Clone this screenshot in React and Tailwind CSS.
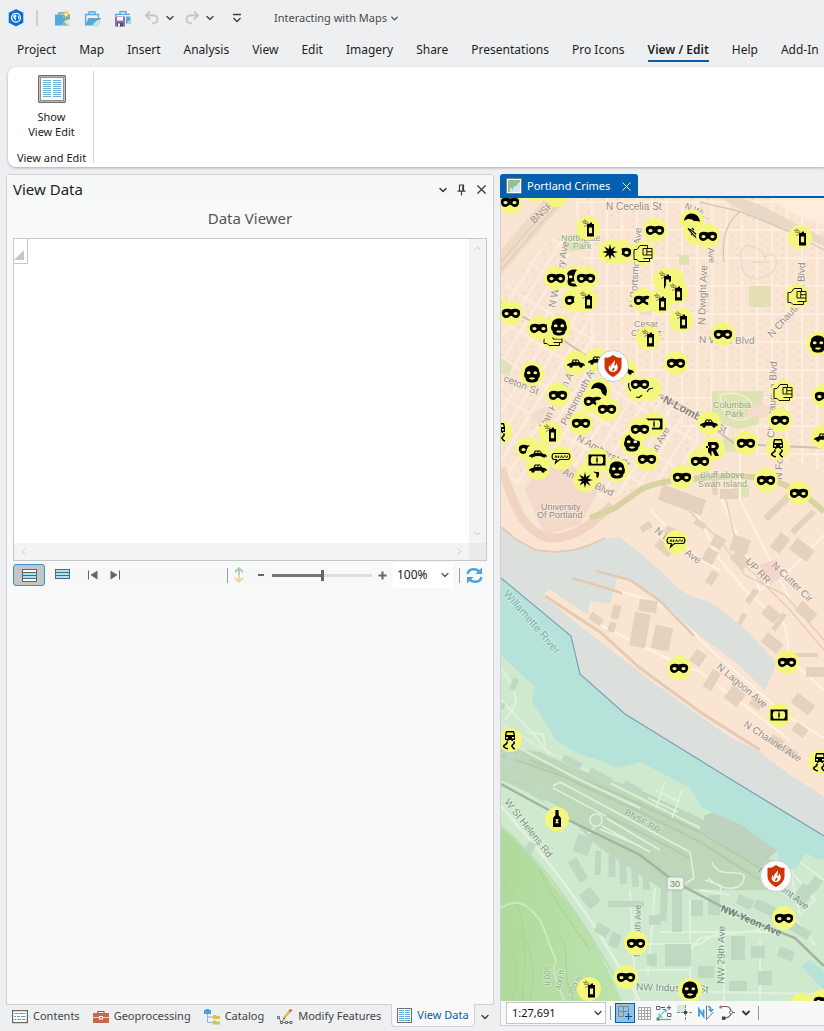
import React from 'react';
import { ChevronDown, ChevronUp, ChevronLeft, ChevronRight, X } from 'lucide-react';

/* ---------- small icons ---------- */

function AppLogo() {
  return (
    <svg width="16" height="18" viewBox="0 0 16 18" aria-hidden="true">
      <path d="M8 1 L14.5 4.2 V13.2 L8 16.6 L1.5 13.2 V4.2 Z" fill="#0a6fdc" stroke="#0a6fdc" strokeWidth="1.6" strokeLinejoin="round" />
      <circle cx="8" cy="8.8" r="4.4" fill="none" stroke="#fff" strokeWidth="1.3" />
      <path d="M5.5 6.4 L8 5.6 L8.6 7.4 L7.2 8.4 L8.2 9.8 L7.6 11.6 L6.4 10 L5.4 9 Z M10 6.6 L11.4 8 L10.8 10.4 L10 9 Z" fill="#fff" />
    </svg>
  );
}

const NewProjectIcon = () => (
  <svg width="18" height="17" viewBox="0 0 18 17" aria-hidden="true">
    <path d="M5 5 V3 H12 V5" fill="none" stroke="#55a9dc" strokeWidth="1.4" />
    <rect x="1" y="4.5" width="15" height="11" fill="#55a9dc" />
    <path d="M8 15.5 L11 10.5 L16 9 V15.5 Z" fill="#d8ecd6" />
    <path d="M8 15.5 L11 12 L14 15.5 Z" fill="#8fbf8a" />
    <path d="M12 0 V9 M7.5 4.5 H16.5 M8.8 1.3 L15.2 7.7 M15.2 1.3 L8.8 7.7" stroke="#e9c766" strokeWidth="1" />
    <circle cx="12" cy="4.5" r="2" fill="#fdf3cf" stroke="#e3b84c" />
  </svg>
);

const OpenProjectIcon = () => (
  <svg width="18" height="17" viewBox="0 0 18 17" aria-hidden="true">
    <path d="M5 4 V2 H11 V4 M1.6 15 V4.5 H14.4 V8" fill="none" stroke="#55a9dc" strokeWidth="1.3" />
    <path d="M1 15.5 L4.5 8 H17 L14.5 15.5 Z" fill="#55a9dc" />
    <path d="M8 15.5 L12 11 L16.5 9 L14.5 15.5 Z" fill="#cde6d2" />
  </svg>
);

const SaveProjectIcon = () => (
  <svg width="18" height="17" viewBox="0 0 18 17" aria-hidden="true">
    <path d="M6 4 V1.6 H12 V4 M1.6 6 V4.4 H16" fill="none" stroke="#55a9dc" strokeWidth="1.3" />
    <path d="M12 6.5 H16.5 V14 H12 Z" fill="#55a9dc" />
    <path d="M12 14 L16.5 9 V14 Z" fill="#b8dcb9" />
    <rect x="1" y="6.5" width="10" height="10" fill="#8b6fb8" />
    <rect x="3" y="7" width="6" height="3.5" fill="#fff" />
    <rect x="3" y="12.5" width="6" height="4" fill="#5b5163" />
    <rect x="4" y="13.5" width="2" height="3" fill="#fff" />
  </svg>
);

const UndoIcon = ({ flip }) => (
  <svg width="16" height="16" viewBox="0 0 16 16" className={flip ? '-scale-x-100' : ''} aria-hidden="true">
    <path d="M6 1.5 L2 5.5 L6 9.5 M2 5.5 H10 C15 5.5 15 13.5 8 13.5" fill="none" stroke="#c3c5c7" strokeWidth="1.8" />
  </svg>
);

const CustomizeIcon = () => (
  <svg width="10" height="10" viewBox="0 0 10 10" aria-hidden="true">
    <path d="M1 1.5 H9 M1.5 5 L5 8.5 L8.5 5" fill="none" stroke="#3c3c3c" strokeWidth="1.3" />
  </svg>
);

const ShowViewIcon = () => (
  <svg width="28" height="28" viewBox="0 0 28 28" aria-hidden="true">
    <rect x="0.7" y="0.7" width="26.6" height="26.6" rx="1" fill="#fff" stroke="#6e6e6e" strokeWidth="1.4" />
    <rect x="2.5" y="2.5" width="23" height="23" fill="#fbfbfb" stroke="#8f8f8f" />
    {[5, 7, 9, 11, 13, 15, 17, 19, 21].map((y) => (
      <path key={y} d={`M5 ${y + 0.5} H13 M15 ${y + 0.5} H23`} stroke="#69b0dd" strokeWidth="1" />
    ))}
  </svg>
);

const PinIcon = () => (
  <svg width="9" height="12" viewBox="0 0 9 12" aria-hidden="true">
    <path d="M2.5 7 V1 H6.5 V7 M5.8 1 V7 M0.5 7.2 H8.5 M4.5 7.2 V11.5" fill="none" stroke="#3c3c3c" strokeWidth="1.2" />
  </svg>
);

const RowsIcon = () => (
  <svg width="15" height="13" viewBox="0 0 15 13" aria-hidden="true">
    <rect x="0.5" y="0.5" width="14" height="12" fill="#fff" stroke="#5f6468" />
    <rect x="1" y="4" width="13" height="5" fill="#a9e1f5" />
    <path d="M0 3.5 H15 M0 6.5 H15 M0 9.5 H15" stroke="#5f6468" />
  </svg>
);

const SelectedRowsIcon = () => (
  <svg width="15" height="10" viewBox="0 0 15 10" aria-hidden="true">
    <rect x="0.5" y="0.5" width="14" height="9" fill="#a9e1f5" stroke="#5f6468" />
    <path d="M0 3.5 H15 M0 6.5 H15" stroke="#5f6468" />
  </svg>
);

const StepIcon = ({ flip }) => (
  <svg width="10" height="10" viewBox="0 0 10 10" className={flip ? '-scale-x-100' : ''} aria-hidden="true">
    <path d="M0.5 0.5 V9.5" stroke="#666" />
    <path d="M9.5 0.5 V9.5 L2.5 5 Z" fill="#666" />
  </svg>
);

const FitHeightIcon = () => (
  <svg width="10" height="16" viewBox="0 0 10 16" aria-hidden="true">
    <path d="M1 5 L5 1.2 L9 5 M5 1.5 V8" fill="none" stroke="#a9cfa9" strokeWidth="1.8" />
    <path d="M1 11 L5 14.8 L9 11 M5 8 V14.5" fill="none" stroke="#f0cfa4" strokeWidth="1.8" />
  </svg>
);

const RefreshIcon = () => (
  <svg width="17" height="17" viewBox="0 0 17 17" aria-hidden="true">
    <path d="M1.6 7 C2.5 1.5 10 0.5 13.6 5" fill="none" stroke="#50a4dc" strokeWidth="2.5" />
    <path d="M16 0.5 V7 H9.5 Z" fill="#50a4dc" />
    <path d="M15.4 10 C14.5 15.5 7 16.5 3.4 12" fill="none" stroke="#50a4dc" strokeWidth="2.5" />
    <path d="M1 16.5 V10 H7.5 Z" fill="#50a4dc" />
  </svg>
);

const ContentsIcon = () => (
  <svg width="16" height="14" viewBox="0 0 16 14" aria-hidden="true">
    <rect x="0.6" y="0.6" width="14.8" height="12" fill="#fff" stroke="#666" strokeWidth="1.2" />
    <path d="M2.5 3.5 H6 M7 3.5 H13.5 M5 6.5 H8 M9 6.5 H13.5 M5 9.5 H9 M10 9.5 H13.5" stroke="#50a4dc" strokeWidth="1.2" />
    <path d="M2.5 6.5 H4 M2.5 9.5 H4" stroke="#777" />
  </svg>
);

const ToolboxIcon = () => (
  <svg width="16" height="14" viewBox="0 0 16 14" aria-hidden="true">
    <path d="M5 4 V1.5 H11 V4" fill="none" stroke="#b5543c" strokeWidth="1.2" />
    <rect y="3" width="16" height="10" fill="#c8694b" />
    <path d="M0 7.5 H16" stroke="#f1d0c4" />
    <rect x="6" y="6" width="4" height="3.5" fill="#fff" />
    <rect x="7" y="7" width="2" height="1.5" fill="#c8694b" />
  </svg>
);

const CatalogIcon = () => (
  <svg width="16" height="16" viewBox="0 0 16 16" aria-hidden="true">
    <rect y="1" width="7" height="4" fill="#4a9fd8" />
    <path d="M2 1 V0.5 H5" stroke="#4a9fd8" />
    <path d="M3.5 5 V13.5 H9 M3.5 8 H9" fill="none" stroke="#8bb8d2" strokeWidth="1" />
    <path d="M9 6 H12 L13 7 H16 V10 H9 Z M9 11.5 H12 L13 12.5 H16 V15.5 H9 Z" fill="#d6c24c" />
  </svg>
);

const ModifyIcon = () => (
  <svg width="16" height="16" viewBox="0 0 16 16" aria-hidden="true">
    <path d="M1.5 8.5 L4.5 13.5 L8 9 M5 13.5 H14" fill="none" stroke="#777" />
    <path d="M0.5 7.5 h2 v2 h-2z M3.5 12.5 h2 v2 h-2z M8.5 12.5 h2 v2 h-2z M13 12.5 h2 v2 h-2z" fill="#fff" stroke="#666" />
    <path d="M7 9 L13 2" stroke="#dfbe45" strokeWidth="2.6" />
    <path d="M12.5 2.6 L14.5 0.5" stroke="#d06a5a" strokeWidth="2.6" />
    <path d="M6 10.5 L7 8.3 L8.3 9.5 Z" fill="#555" />
  </svg>
);

const ViewDataIcon = () => (
  <svg width="15" height="15" viewBox="0 0 15 15" aria-hidden="true">
    <rect x="0.5" y="0.5" width="14" height="14" fill="#fff" stroke="#6e6e6e" />
    {[2.5, 4.5, 6.5, 8.5, 10.5, 12.5].map((y) => (
      <path key={y} d={`M2 ${y} H7 M8 ${y} H13`} stroke="#5aaae0" />
    ))}
  </svg>
);

const MapTabIcon = () => (
  <svg width="16" height="16" viewBox="0 0 16 16" aria-hidden="true">
    <rect x="0.5" y="0.5" width="15" height="15" fill="#fff" stroke="#7b7b7b" />
    <rect x="2" y="2" width="12" height="12" fill="#cfe8f5" />
    <path d="M2 2 H14 V4 L11 6 V8 H8 V10 L6 11 L7 13 L6 14 H2 Z" fill="#93bf95" />
    <path d="M4 9 L6 11 L7 14 H4 Z" fill="#cfe8f5" />
  </svg>
);

/* ---------- map symbols, each drawn around 0,0 ---------- */

const glyphs = {
  none: null,
  mask: (
    <path fillRule="evenodd" d="M-9 -1.5 C-8.5 -4.5 -3.5 -4.8 0 -3.4 C3.5 -4.8 8.5 -4.5 9 -1.5 C9.6 2 8 5 4.6 5 C2 5 1.4 2.8 0 2.8 C-1.4 2.8 -2 5 -4.6 5 C-8 5 -9.6 2 -9 -1.5 Z M-6.6 0.6 A2 1.5 0 1 0 -2.4 0.6 A2 1.5 0 1 0 -6.6 0.6 Z M2.4 0.6 A2 1.5 0 1 0 6.6 0.6 A2 1.5 0 1 0 2.4 0.6 Z" />
  ),
  ski: (
    <path fillRule="evenodd" d="M0 -8.5 C4.5 -8.5 7 -6 7.2 -2.5 L8 0 L7.6 3 L6.4 4 C6.2 7.4 4 8.5 0 8.5 C-4 8.5 -6.2 7.4 -6.4 4 L-7.6 3 L-8 0 L-7.2 -2.5 C-7 -6 -4.5 -8.5 0 -8.5 Z M-5.2 -1.2 A1.9 1.5 0 1 0 -1.4 -1.2 A1.9 1.5 0 1 0 -5.2 -1.2 Z M1.4 -1.2 A1.9 1.5 0 1 0 5.2 -1.2 A1.9 1.5 0 1 0 1.4 -1.2 Z M-3 4.6 C-2.5 3.4 -1 3.2 0 3.6 C1 3.2 2.5 3.4 3 4.6 C2 6 -2 6 -3 4.6 Z" />
  ),
  spray: (
    <>
      <path fillRule="evenodd" d="M2.5 -5.5 H4 V-4 H6 V8.5 H-1 V-4 H1.2 Z M0.9 -0.5 V5.2 H4.1 V-0.5 Z" />
      <path d="M0.6 -5 L-4 -8.5 M0 -4.2 L-5 -5 M0 -3.4 L-4 -1.5 M-6 -7 L-2 -5.8" fill="none" stroke="#4d4d2c" strokeWidth="0.7" />
    </>
  ),
  car: (
    <>
      <path d="M-9 2.6 C-9 0.4 -6 0 -4.5 -0.6 L-3.2 -3.6 H2 L4.2 -0.6 C7 0 9 0.6 9 2.8 H-9 Z" />
      <circle cx="-5" cy="3" r="1.8" />
      <circle cx="5" cy="3" r="1.8" />
      <path d="M-2.3 -2.5 H-0.6 V-0.9 H-2.9 Z M0.4 -2.5 H1.6 L2.7 -0.9 H0.4 Z" fill="#f5f77c" />
    </>
  ),
  skid: (
    <>
      <path fillRule="evenodd" d="M-4 -9 H4 L5 -5 V0 H3 V1 H1.5 V0 H-1.5 V1 H-3 V0 H-5 V-5 Z M-3 -7.5 L-3.6 -5 H3.6 L3 -7.5 Z M-4 -3 H-2 V-1.6 H-4Z M2 -3 H4 V-1.6 H2Z" />
      <path d="M-3.5 1.5 C-1 4 -8 5 -6 7 C-4.5 8.5 -3 8.8 -2 8.8 M3.5 1.5 C6 4 0 5 2.5 7 C3.5 8 3 8.8 5 8.8" fill="none" stroke="#000" strokeWidth="1.6" />
    </>
  ),
  fist: (
    <path d="M-9 -3.5 H-6 L-3 -7.5 H4.5 V-4.5 M-9 -3.5 V6.5 H-6 L-4 8.5 H6.5 V5.5 M0 -4.5 H9 V5.5 H0.5 M0 -4.5 V2 H9 M3.8 -4.5 V2 M3.8 -1.3 H9" fill="none" stroke="#111" strokeWidth="1" />
  ),
  speech: (
    <>
      <path d="M-7 -4.5 H7 C9.5 -4.5 9.5 1.5 7 1.5 H-1.5 L-5.5 5 L-4.5 1.5 H-7 C-9.5 1.5 -9.5 -4.5 -7 -4.5 Z" fill="none" stroke="#000" strokeWidth="1.2" />
      <path d="M-6 0 L-5 -2.5 L-4 0 M-2.5 -2.5 V0 M-3.4 -1.2 H-1.6 M-0.5 0 L0.5 -2.5 L1.5 0 M3.5 -2.5 L2.5 0 M4.5 -2.5 L5.5 0 M6.6 -2.5 V-0.4" fill="none" stroke="#000" strokeWidth="0.8" />
    </>
  ),
  money: (
    <>
      <path fillRule="evenodd" d="M-8.5 -5.5 H8.5 V5.5 H-8.5 Z M-4.6 -3.8 C-6.8 -3.4 -6.8 3.4 -4.6 3.8 H4.6 C6.8 3.4 6.8 -3.4 4.6 -3.8 Z" />
      <path d="M0 -2.5 V2.5 M0 -5 V-3.4 M0 5 V3.4" stroke="#000" strokeWidth="1.4" />
    </>
  ),
  bottle: (
    <path fillRule="evenodd" d="M-1.6 -9 H1.6 V-4 C1.6 -3 4 -2.5 4 0 V8 H-4 V0 C-4 -2.5 -1.6 -3 -1.6 -4 Z M-2 0.3 L-0.6 2.2 L-2 4.2 H2 L0.6 2.2 L2 0.3 Z" />
  ),
  burst: (
    <path d="M0 -8 L1.2 -3 L5.5 -5.5 L3 -1.2 L8 0 L3 1.3 L5.5 6 L1.2 3 L0 8 L-1.3 3 L-5.5 5.5 L-3 1.2 L-8 0 L-3 -1.3 L-6 -5.5 L-1.2 -3 Z" />
  ),
  letter: (
    <path fillRule="evenodd" d="M-5 -7 H2 C7 -7 7 0.5 3 0.8 L6 7 H2 L-0.5 2 H-1.5 V7 H-5 Z M-1.5 -4 H1 C3 -4 3 -1 1 -1 H-1.5 Z M-7 -3 H-4 V-1 H-7Z" />
  ),
  umbrella: (
    <path d="M-8 0 C-7 -10 7 -10 8 1 L7 6 L3 4 L2 0 C0 -2.5 -5 -3 -8 0 Z" />
  ),
  knife: (
    <path d="M-8 -4.5 L-4 -2.5 L3 4 L2 6 L-3 1.5 Z M-5 2 L-3.5 0 M-2 -3 L-4 -5" fill="#f5f77c" stroke="#111" strokeWidth="1.2" />
  ),
  scuffle: (
    <path d="M-9 -6 C-10 -3 -9 0 -7 2 M-2 8 L1 8.5 L4 6 M9 3 L11 0 L15 -1" fill="none" stroke="#111" strokeWidth="1.2" />
  ),
};

function Marker({ x, y, kind }) {
  return (
    <g transform={`translate(${x} ${y})`}>
      <circle r="12" fill="#f5f77c" />
      {glyphs[kind]}
    </g>
  );
}

function FireMarker({ x, y }) {
  return (
    <g transform={`translate(${x} ${y})`}>
      <circle r="15.5" fill="#fff" stroke="#c9cbd6" />
      <path d="M0 -11 C2.5 -9 5 -8.2 8.5 -8.2 V0 C8.5 5.5 4 9 0 11 C-4 9 -8.5 5.5 -8.5 0 V-8.2 C-5 -8.2 -2.5 -9 0 -11 Z" fill="#cf3306" />
      <path d="M1.5 -6 C3 -3.4 0.4 -2 1.6 0 C2.6 -0.4 3.4 -1.6 3.2 -3 C6 0.6 5 5.6 0 6 C-5 5.8 -5.4 0.8 -2.8 -1 C-2.8 0.6 -2.4 1.2 -1.6 1.4 C-3 -2 1 -3 1.5 -6 Z" fill="#fff" />
      <path d="M0.8 1.6 C0 3 -1.6 3.4 -0.8 5 C1.4 5 2.2 3 0.8 1.6 Z" fill="#cf3306" />
    </g>
  );
}

const markers = [
  ['none', 535, 190], ['none', 556, 195], ['mask', 510, 202], ['spray', 588, 228], ['mask', 655, 230],
  ['umbrella', 692, 221], ['knife', 696, 233], ['mask', 708, 236], ['spray', 800, 237],
  ['mask', 622, 252], ['burst', 610, 252], ['fist', 643, 253], ['ski', 574, 278], ['mask', 556, 278],
  ['mask', 586, 278], ['none', 672, 280], ['spray', 665, 280], ['spray', 676, 292], ['mask', 574, 300],
  ['spray', 586, 300], ['mask', 643, 300], ['spray', 660, 302], ['mask', 492, 303], ['mask', 511, 313],
  ['spray', 681, 320], ['fist', 553, 337], ['mask', 539, 328], ['ski', 559, 327], ['mask', 723, 334],
  ['spray', 648, 338], ['ski', 818, 344], ['fist', 797, 296], ['car', 576, 363], ['car', 597, 360],
  ['car', 625, 370], ['mask', 676, 363], ['ski', 532, 374], ['fist', 783, 392], ['mask', 824, 396],
  ['none', 649, 389], ['scuffle', 638, 389], ['umbrella', 599, 390], ['mask', 558, 395],
  ['mask', 593, 401], ['mask', 607, 409], ['mask', 581, 423], ['spray', 550, 433], ['skid', 500, 432],
  ['money', 654, 424], ['ski', 632, 443], ['mask', 640, 429], ['mask', 647, 459], ['car', 709, 423],
  ['letter', 713, 449], ['mask', 700, 461], ['mask', 682, 477], ['mask', 746, 443], ['mask', 780, 420],
  ['skid', 778, 448], ['mask', 766, 480], ['mask', 799, 493], ['car', 823, 437], ['mask', 528, 449],
  ['car', 538, 454], ['car', 538, 468], ['speech', 561, 458], ['mask', 590, 474], ['money', 597, 460],
  ['burst', 585, 480], ['ski', 617, 470], ['speech', 676, 542], ['mask', 679, 668], ['mask', 787, 662],
  ['money', 779, 715], ['skid', 510, 740], ['skid', 820, 762], ['bottle', 557, 819], ['mask', 784, 918],
  ['mask', 636, 943], ['mask', 626, 977], ['ski', 690, 990], ['spray', 589, 989], ['none', 802, 1005],
  ['mask', 823, 1001],
];

/* x, y, rotation, text, size, colour, weight */
const labels = [
  [606, 210, 0, 'N Cecelia St', 10],
  [684, 208, 25, 'N Wi...', 9],
  [534, 224, -42, 'BNSF', 10],
  [561, 241, 0, 'Northgate', 9, '#8faa80'],
  [573, 249, 0, 'Park', 9, '#8faa80'],
  [636, 308, -86, 'N Portsmouth Ave', 10],
  [555, 308, -78, 'N Woolsey Ave', 10],
  [705, 325, -88, 'N Dwight Ave', 10],
  [708, 248, 86, 'Ave', 9],
  [804, 296, -88, 'ua Blvd', 10],
  [772, 338, -48, 'N Chauta', 10],
  [634, 327, 0, 'Cesar', 9],
  [631, 336, 0, 'Chavez', 9],
  [699, 343, 1, 'N Willis Blvd', 10],
  [774, 448, -88, 'N Chautauqua Blvd', 10],
  [503, 381, 22, 'ceton St', 10],
  [545, 429, -62, 'Van Houten Ave', 10],
  [566, 426, -62, 'Portsmouth Ave', 10],
  [659, 400, 28, '-N-Lombard', 11, '#8a8277', 'bold'],
  [716, 430, 20, 'St', 10],
  [576, 440, 29, 'N Amherst St', 10],
  [562, 474, 26, 'Amh', 10],
  [594, 488, 26, 'Blvd', 10],
  [656, 455, -62, 'lin Ave', 10],
  [713, 408, 0, 'Columbia', 9, '#8faa80'],
  [725, 417, 0, 'Park', 9, '#8faa80'],
  [700, 478, 0, 'Bluff above', 9, '#8faa80'],
  [698, 487, 0, 'Swan Island', 9, '#8faa80'],
  [782, 480, -88, 'N Fo', 10],
  [541, 510, 0, 'University', 9],
  [537, 518, 0, 'Of Portland', 9],
  [654, 532, 36, 'N Basin Ave', 10],
  [745, 562, 46, 'UP RR', 10],
  [771, 566, 44, 'N Cutter Cir', 10],
  [503, 594, 49, 'Willamette River', 11, '#7fb0a9'],
  [716, 668, 40, 'N Lagoon Ave', 10],
  [743, 726, 33, 'N Channel Ave', 10],
  [624, 814, 30, 'BNSF RR', 9, '#94a88e'],
  [504, 802, 52, 'W St Helens Rd', 10, '#7c9480'],
  [757, 872, 38, 'NW Front Ave', 10, '#7c9480'],
  [720, 911, 23, 'NW-Yeon-Ave', 10, '#6c8070', 'bold'],
  [640, 957, -89, 'NW 35th Ave', 9, '#7c9480'],
  [724, 984, -89, 'NW 29th Ave', 10, '#7c9480'],
  [636, 990, 2, 'NW Industrial St', 10, '#7c9480'],
  [544, 966, 88, '500 ft', 8, '#8fae85'],
  [561, 990, -80, '400 ft', 8, '#8fae85'],
  [572, 996, -60, '300 ft', 8, '#8fae85'],
];

/* x, y, width, height, rotation */
const harbourBuildings = [
  [640, 630, 16, 34, 10], [662, 638, 18, 24, 12], [648, 606, 18, 12, 8], [616, 612, 8, 14, 15], [612, 627, 7, 10, 15],
  [596, 619, 14, 8, 35], [698, 658, 12, 14, 35], [712, 680, 10, 20, 30], [735, 696, 16, 16, 38], [772, 643, 20, 12, 38],
  [771, 614, 16, 12, 40], [779, 622, 5, 20, 35], [752, 596, 6, 16, 35], [742, 619, 5, 12, 30], [780, 543, 12, 18, 38],
  [806, 612, 20, 12, 42], [802, 550, 22, 14, 38], [806, 655, 24, 4, 0], [803, 704, 22, 12, 38], [776, 742, 14, 10, 33],
  [790, 752, 16, 8, 33], [664, 548, 18, 9, 40], [710, 556, 12, 14, 30], [718, 542, 12, 12, 30], [712, 578, 8, 14, 30],
  [682, 500, 46, 16, 20], [715, 486, 5, 18, 0], [729, 494, 18, 10, 0], [646, 527, 12, 7, -30], [740, 545, 18, 16, 20],
  [672, 532, 14, 8, 20], [700, 524, 12, 6, 30], [780, 505, 40, 7, -44], [803, 522, 30, 6, -44], [740, 560, 18, 12, 45],
  [756, 704, 12, 8, 35], [800, 730, 14, 10, 35], [815, 672, 18, 10, 0],
];

const southBuildings = [
  [508, 762, 9, 18, 30], [520, 772, 9, 18, 30], [540, 792, 16, 14, 30], [583, 845, 16, 18, 20], [598, 863, 6, 24, 2],
  [578, 870, 10, 24, -30], [612, 866, 7, 22, 0], [623, 870, 7, 28, -3], [635, 874, 7, 26, -3], [646, 878, 7, 24, -3],
  [590, 898, 14, 18, -38], [626, 904, 36, 6, 0], [664, 900, 7, 42, 3], [677, 910, 10, 44, 0], [697, 908, 12, 16, 0],
  [714, 905, 12, 20, 0], [602, 930, 14, 10, 30], [615, 940, 10, 14, 20], [655, 920, 12, 10, 0], [678, 955, 26, 22, 0],
  [652, 960, 10, 12, 0], [706, 972, 16, 12, 0], [738, 948, 14, 24, 0], [758, 952, 14, 12, 0], [738, 986, 18, 10, 0],
  [765, 978, 14, 14, 0], [745, 902, 16, 10, 25], [765, 908, 22, 10, 25], [799, 930, 24, 9, 30], [786, 954, 16, 10, 20],
  [803, 895, 14, 20, 35], [815, 884, 10, 14, 35], [600, 777, 24, 9, 28], [632, 788, 18, 8, 28],
  [572, 762, 20, 7, 28], [514, 684, 6, 12, 20], [500, 705, 10, 6, 30], [530, 848, 8, 12, 30],
];

function Buildings({ list, fill }) {
  return list.map(([x, y, w, h, r]) => (
    <rect key={`${x}-${y}`} x={x - w / 2} y={y - h / 2} width={w} height={h} fill={fill} transform={`rotate(${r} ${x} ${y})`} />
  ));
}

const northLand =
  'M501 198 H824 V797 L806 785 L790 775 L760 752 L730 737 L690 709 L650 680 L620 657 L580 626 L543 596 L549 589 L588 615 L590 601 L610 604 L617 578 L628 580 L665 605 L694 631 L735 662 L765 690 L777 663 L750 634 L730 617 L710 602 L690 596 L678 588 L662 572 L642 555 L620 537 L605 539 L590 546 L575 551 L555 553 L535 551 L515 540 L501 528 Z';

const southLand =
  'M501 655 L520 673 L535 687 L532 702 L545 722 L556 740 L576 753 L604 762 L618 768 L640 762 L652 768 L690 788 L702 808 L740 824 L778 851 L779 870 L796 868 L806 853 L815 858 L824 860 V1001 H501 Z';

function CrimeMap() {
  return (
    <svg
      className="absolute inset-0 size-full"
      viewBox="501 198 323 803"
      preserveAspectRatio="xMidYMid slice"
      role="img"
      aria-label="Portland crimes map"
      fontFamily="'Liberation Sans', Arial, sans-serif"
    >
      <defs>
        <pattern id="grid" width="15" height="28" patternUnits="userSpaceOnUse">
          <path d="M7 0 V28 M0 6 H15" stroke="#fdf0e3" strokeWidth="1.6" />
          <path d="M1 2 h3 v2 h-3z M11 10 h2 v3 h-2z M2 14 h2 v3 h-2z M11 19 h2 v2 h-2z M2 23 h2 v2 h-2z" fill="#f0decd" />
        </pattern>
        <pattern id="slant" width="13" height="32" patternUnits="userSpaceOnUse" patternTransform="rotate(32)">
          <path d="M6 0 V32 M0 6 H13" stroke="#fcefe2" strokeWidth="1.6" />
          <path d="M1 2 h2 v2 h-2z M10 10 h2 v3 h-2z M1 15 h2 v3 h-2z M9 21 h2 v2 h-2z M1 26 h2 v2 h-2z" fill="#efdccb" />
        </pattern>
        <clipPath id="north"><path d={northLand} /></clipPath>
        <clipPath id="south"><path d={southLand} /></clipPath>
        <linearGradient id="hill" x1="0" y1="0" x2="1" y2="0">
          <stop offset="0" stopColor="#b0da9b" />
          <stop offset="1" stopColor="#bce2ae" />
        </linearGradient>
      </defs>

      <rect x="0" y="0" width="1400" height="1400" fill="#dbe0dc" />
      <path d="M501 578 L571 636 L580 674 L625 714 L732 780 L824 836 V1001 H501 Z" fill="#b5e3da" />
      <path d={northLand} fill="#fae5d3" />

      <g clipPath="url(#north)">
        <path d="M575 198 H824 V470 L700 440 L590 360 Z" fill="url(#grid)" />
        <path d="M501 290 L560 230 L575 270 L600 350 L700 430 L690 480 L600 500 L501 480 Z" fill="url(#slant)" />
        <path d="M501 275 L568 198 H545 L501 250 Z" fill="#efdac3" />
        <path d="M501 262 L556 198 M501 270 L563 198" stroke="#d8c3ab" strokeWidth="1" />
        <path d="M720 198 L745 212 L824 246 V238 L760 205 L742 198 Z" fill="#ead8c6" />
        <path d="M700 202 L742 212 L790 232 L824 250 M740 212 C724 224 722 245 724 262" fill="none" stroke="#d9c7b6" strokeWidth="1.4" />
        <path d="M770 198 H824 V225 L790 212 Z" fill="#ffecdb" />
        <path d="M749 286 h22 v21 h-22z" fill="#e5dfb4" />
        <path d="M563 236 l22 -4 v18 l-20 2z M679 255 h10 v10 h-10z" fill="#dfe2b5" />
        <path d="M712 391 h52 l-6 34 l-20 4 l-26 -8z" fill="#dfe2b4" />
        <path d="M720 395 C745 388 758 405 752 415 C740 425 722 420 720 395 Z" fill="none" stroke="#f4f0d0" strokeWidth="1.5" />
        <path d="M501 358 l12 8 l-4 10 l-8 -2z M723 438 h20 v14 h-20z M733 485 h16 v12 h-16z" fill="#e2e2b8" />
        <path d="M742 262 C735 240 760 242 765 258 C775 245 785 270 765 276 C755 282 740 278 742 262 Z M750 262 h20" fill="none" stroke="#eedbc9" strokeWidth="2" />
        <path d="M525 490 L545 455 L580 470 L600 488 L580 525 L545 535 Z" fill="#f2d9ca" />
        <path d="M530 414 l18 -8 l6 12 l-14 10z M640 305 h12 v10 h-12z M748 405 h24 v12 h-24z" fill="#f4dccd" />
        <path d="M501 468 C514 500 518 528 548 538 C575 540 594 522 612 505" fill="none" stroke="#f1d3c1" strokeWidth="9" />
        <path d="M501 528 L515 540 L535 551 L555 553 L575 551 L590 546 L605 539" fill="none" stroke="#e4c9b5" strokeWidth="4" />
        <path d="M590 518 L615 508 L640 490 C655 482 672 480 690 479 C745 474 785 472 824 512" fill="none" stroke="#d9d3a4" strokeWidth="6" />
        <path d="M501 304 L560 338 L600 365 L690 410 L735 444 L824 448" fill="none" stroke="#cdbfb2" strokeWidth="2" />
        <path d="M545 596 L600 632 L640 668 L700 712 L760 750" fill="none" stroke="#e6cbb4" strokeWidth="3" />
        <path d="M618 590 L680 612 L700 640 L785 715 L824 738 M600 625 L660 655 L700 672 L790 740 M690 500 L720 560 L745 590 L785 625 L790 660 L824 690 M720 495 L735 530 L760 590 L790 570 L824 535 M740 440 V500 L790 600 M650 510 L700 560 L720 570" fill="none" stroke="#fff2e3" strokeWidth="2" />
        <path d="M690 512 L720 540 L745 575 L785 595 L824 640 M725 495 L740 560 L790 610 L824 650" fill="none" stroke="#e5cbb3" strokeWidth="1.2" />
        <path d="M760 565 l16 -6 l8 16 l-14 10z" fill="#f3d5cb" />
        <Buildings list={harbourBuildings} fill="#e6d0be" />
      </g>
      <path d="M572 578 L606 588 L622 593 M596 571 L630 580 L660 601 L694 636" fill="none" stroke="#e2cab2" strokeWidth="2.5" />

      <path d={southLand} fill="#cfe9cf" />
      <g clipPath="url(#south)">
        <path d="M501 745 L540 752 L575 768 L640 790 L700 818 L775 862 L770 890 L720 890 L660 888 L600 848 L556 805 L501 780 Z" fill="#bed7b9" />
        <path d="M501 755 L560 775 L640 812 L700 842 L760 880 M530 760 L620 795 L700 832 L760 868 M556 790 L640 832 L690 858" fill="none" stroke="#b3cdad" strokeWidth="2.5" />
        <path d="M501 724 L545 750 L620 788 L700 828 M501 738 L570 775 L640 808" fill="none" stroke="#dceedb" strokeWidth="2" />
        <path d="M705 815 L720 810 L778 850 L760 866 L700 832 Z" fill="#bcd3bd" />
        <path d="M553 786 L560 782 L690 852 L694 878 L685 884 M553 788 L606 816 M590 820 a6 6 0 1 0 12 0 a6 6 0 1 0 -12 0 M596 826 L588 834 M602 826 L650 852 M606 818 L660 850 M600 829 L640 846 M712 862 C718 880 740 868 744 876 C745 890 725 894 708 878 M722 895 L720 885 L705 880" fill="none" stroke="#e0f1de" strokeWidth="1.6" />
        <path d="M501 828 C530 850 548 880 572 908 C592 935 604 960 622 1001 H501 Z" fill="url(#hill)" />
        <path d="M501 880 C520 895 530 930 522 1001 M510 925 C530 935 538 965 530 1001 M501 945 C518 950 520 975 512 1001 M560 935 C572 955 560 975 574 1001 M540 870 C552 900 570 920 590 950" fill="none" stroke="#a9d597" strokeWidth="1.2" />
        <path d="M501 908 C520 895 530 908 540 920 C550 940 548 945 556 960 C550 975 560 985 564 1001" fill="none" stroke="#cbe9c0" strokeWidth="2" />
        <path d="M501 806 C535 845 575 895 600 935 L640 1001" fill="none" stroke="#e3f3df" strokeWidth="2.5" />
        <path d="M501 826 C535 855 565 895 590 935 L620 985" fill="none" stroke="#bfdcb8" strokeWidth="2" />
        <path d="M655 888 L648 975 M640 944 H700 L718 932 H780 M636 970 H690 V900 M690 970 V1001 M660 932 H720 M630 890 L636 1001 M724 930 V1001 M700 890 L730 895 M760 940 V1001 M700 992 L824 994 M690 950 L700 938 L760 930 M790 870 L815 900 L800 915 Z M800 862 L824 880 M785 905 L815 945" fill="none" stroke="#e0f2df" strokeWidth="2" />
        <path d="M655 790 L680 802 M665 782 L656 808 M682 790 L672 818 M648 798 L678 812" fill="none" stroke="#e2f2e0" strokeWidth="1.5" />
        <path d="M501 668 C515 690 524 700 505 720 M501 700 L530 730 L550 755 M526 732 L543 734 L545 745" fill="none" stroke="#e0f1de" strokeWidth="2" />
        <Buildings list={southBuildings} fill="#bfd8c2" />
        <path d="M501 784 L556 814 L640 855 L675 882 L740 916 L795 938 L824 966" fill="none" stroke="#9eb5a1" strokeWidth="2.5" />
        <path d="M801 966 L810 960 L824 972 V990 Z" fill="#b5e3da" />
        <rect x="667" y="877" width="17" height="13" rx="2" fill="#ecf4e9" stroke="#a9bba9" />
        <text x="670" y="887" fontSize="9" fill="#748776">30</text>
      </g>

      <path d="M501 578 L571 636 L580 674 L625 714 L732 780 L824 836" fill="none" stroke="#7e9fb5" strokeWidth="1.2" />

      {labels.map(([x, y, r, text, size, color, weight]) => (
        <text
          key={`${x}-${y}`}
          x={x}
          y={y}
          transform={`rotate(${r} ${x} ${y})`}
          fontSize={size}
          fontWeight={weight || 'normal'}
          fill={color || '#988e82'}
          stroke="#ffffff"
          strokeOpacity="0.3"
          strokeWidth="2"
          paintOrder="stroke"
        >
          {text}
        </text>
      ))}

      {markers.map(([kind, x, y]) => (
        <Marker key={`${kind}-${x}-${y}`} kind={kind} x={x} y={y} />
      ))}
      <g transform="translate(640 384)">{glyphs.mask}</g>
      <FireMarker x={613} y={366} />
      <FireMarker x={776} y={876} />
    </svg>
  );
}

/* ---------- application chrome ---------- */

function TitleBar() {
  return (
    <header className="flex h-9 items-center pl-2 text-[#4a4a4a]">
      <AppLogo />
      <span className="ml-3 h-4 w-0.5 bg-[#cfd0d2]" />
      <div className="ml-4 flex items-center gap-3">
        <button aria-label="New project" className="flex"><NewProjectIcon /></button>
        <button aria-label="Open project" className="flex"><OpenProjectIcon /></button>
        <button aria-label="Save project" className="flex"><SaveProjectIcon /></button>
      </div>
      <div className="ml-3 flex items-center gap-2">
        <div className="flex items-center gap-1">
          <button aria-label="Undo" className="flex"><UndoIcon /></button>
          <button aria-label="Undo history" className="flex"><ChevronDown size={12} strokeWidth={3} /></button>
        </div>
        <div className="flex items-center gap-1">
          <button aria-label="Redo" className="flex"><UndoIcon flip /></button>
          <button aria-label="Redo history" className="flex"><ChevronDown size={12} strokeWidth={3} /></button>
        </div>
      </div>
      <button aria-label="Customize toolbar" className="ml-4 flex"><CustomizeIcon /></button>
      <button className="ml-8 flex items-center gap-0.5 text-[11px] whitespace-nowrap">
        Interacting with Maps
        <ChevronDown size={11} strokeWidth={3} />
      </button>
    </header>
  );
}

const ribbonTabs = [
  'Project', 'Map', 'Insert', 'Analysis', 'View', 'Edit', 'Imagery', 'Share',
  'Presentations', 'Pro Icons', 'View / Edit', 'Help', 'Add-In',
];

function RibbonTabs() {
  return (
    <nav className="flex h-[31px] items-center gap-[23px] overflow-hidden pl-[17px] text-[12px] leading-4 text-[#1e1e1e]">
      {ribbonTabs.map((tab) => (
        <button
          key={tab}
          className={
            tab === 'View / Edit'
              ? 'shrink-0 border-b-2 border-[#005fae] pb-0.5 font-semibold whitespace-nowrap'
              : 'shrink-0 border-b-2 border-transparent pb-0.5 whitespace-nowrap'
          }
        >
          {tab}
        </button>
      ))}
    </nav>
  );
}

function Ribbon() {
  return (
    <section className="ml-2 flex h-[100px] rounded-l-lg bg-white pt-1 pb-1 text-[11px] leading-[15px] text-[#222] shadow-[0_1px_3px_rgba(0,0,0,0.28)]">
      <div className="flex w-[86px] flex-col items-center border-r border-[#d5d5d5] pt-1 pl-0.5">
        <button className="flex flex-col items-center gap-1.5">
          <ShowViewIcon />
          <span>Show<br />View Edit</span>
        </button>
        <span className="mt-[11px] whitespace-nowrap">View and Edit</span>
      </div>
    </section>
  );
}

function DataGrid() {
  return (
    <div className="mx-1.5 grid h-[323px] grid-cols-[1fr_17px] grid-rows-[1fr_17px] border border-[#c8c8c8] bg-white">
      <div>
        <div className="flex h-[25px] w-[14px] items-end border-r border-b border-[#c8c8c8] pb-[3px]">
          <svg width="10" height="10" viewBox="0 0 11 11" aria-hidden="true"><path d="M11 0 V11 H0 Z" fill="#c6c6c6" /></svg>
        </div>
      </div>
      <div className="flex flex-col items-center justify-between bg-[#f3f3f3] py-1 text-[#c4c4c4]">
        <button aria-label="Scroll up"><ChevronUp size={11} /></button>
        <button aria-label="Scroll down"><ChevronDown size={11} /></button>
      </div>
      <div className="flex items-center justify-between bg-[#f3f3f3] px-1 text-[#c4c4c4]">
        <button aria-label="Scroll left"><ChevronLeft size={11} /></button>
        <button aria-label="Scroll right"><ChevronRight size={11} /></button>
      </div>
      <div className="bg-[#eaeaea]" />
    </div>
  );
}

function GridToolbar() {
  return (
    <div className="mx-1.5 flex h-[28px] items-center justify-between bg-[#f7f9f8] text-[#555]">
      <div className="flex items-center">
        <button aria-label="Show all rows" className="flex h-[22px] w-8 items-center justify-center rounded-[3px] border border-[#3793cd] bg-[#c3c5c8]"><RowsIcon /></button>
        <button aria-label="Show selected rows" className="ml-2.5 flex pb-0.5"><SelectedRowsIcon /></button>
        <button aria-label="First record" className="ml-[18px] flex"><StepIcon /></button>
        <button aria-label="Last record" className="ml-3 flex"><StepIcon flip /></button>
      </div>
      <div className="flex items-center">
        <span className="h-[15px] w-px bg-[#9a9a9a]" />
        <button aria-label="Fit height" className="ml-1.5 flex"><FitHeightIcon /></button>
        <button aria-label="Zoom out" className="ml-3.5 flex h-4 w-2 items-center"><span className="h-0.5 w-1.5 bg-[#666]" /></button>
        <input
          type="range"
          aria-label="Zoom"
          min="0"
          max="100"
          defaultValue="50"
          className="ml-1.5 h-4 w-[100px] appearance-none bg-transparent [&::-webkit-slider-runnable-track]:h-[3px] [&::-webkit-slider-runnable-track]:bg-linear-to-r [&::-webkit-slider-runnable-track]:from-[#737373] [&::-webkit-slider-runnable-track]:from-50% [&::-webkit-slider-runnable-track]:to-[#dedede] [&::-webkit-slider-runnable-track]:to-50% [&::-webkit-slider-thumb]:-mt-1 [&::-webkit-slider-thumb]:h-[11px] [&::-webkit-slider-thumb]:w-[3px] [&::-webkit-slider-thumb]:appearance-none [&::-webkit-slider-thumb]:bg-[#666]"
        />
        <button aria-label="Zoom in" className="ml-1.5 flex">
          <svg width="9" height="9" viewBox="0 0 9 9" aria-hidden="true"><path d="M0.5 4.5 H8.5 M4.5 0.5 V8.5" stroke="#666" strokeWidth="2" /></svg>
        </button>
        <div className="relative ml-1.5 flex items-center">
          <select aria-label="Zoom level" className="h-[26px] w-[60px] appearance-none bg-white pl-1 text-[12px] text-[#222]">
            <option>100%</option>
          </select>
          <ChevronDown size={12} strokeWidth={2.5} className="pointer-events-none absolute right-0.5" />
        </div>
        <span className="ml-1.5 h-[15px] w-px bg-[#9a9a9a]" />
        <button aria-label="Refresh" className="mr-1 ml-1.5 flex"><RefreshIcon /></button>
      </div>
    </div>
  );
}

const paneTabs = [
  ['Contents', ContentsIcon],
  ['Geoprocessing', ToolboxIcon],
  ['Catalog', CatalogIcon],
  ['Modify Features', ModifyIcon],
];

function ViewDataPane() {
  return (
    <section className="flex min-w-0 grow-[488] basis-0 flex-col">
      <div className="flex flex-1 flex-col rounded-t-[3px] border border-[#cfd0d8] bg-[#f9f9f9]">
        <div className="flex h-[29px] items-center justify-between bg-[#f7f9f8] pr-1 pl-1.5 text-[#3c3c3c]">
          <h2 className="text-[15px] text-[#1e1e1e]">View Data</h2>
          <div className="flex items-center gap-2">
            <button aria-label="Pane options"><ChevronDown size={12} strokeWidth={3} /></button>
            <button aria-label="Pin pane" className="flex"><PinIcon /></button>
            <button aria-label="Close pane"><X size={15} strokeWidth={2} /></button>
          </div>
        </div>
        <h3 className="h-[34px] pt-1 text-center text-[15px] leading-5 text-[#555]">Data Viewer</h3>
        <DataGrid />
        <GridToolbar />
      </div>
      <div className="flex h-[26px] items-start pl-1.5 text-[11px] text-[#444]">
        <div className="flex h-[23px] items-center gap-[13px]">
          {paneTabs.map(([name, Icon]) => (
            <button key={name} className="flex items-center gap-[5px] whitespace-nowrap"><Icon />{name}</button>
          ))}
        </div>
        <button className="-mt-px ml-2.5 flex h-[23px] items-center gap-[5px] rounded-b border border-t-0 border-[#cfd0d8] bg-[#f9f9f9] px-[5px] pt-px whitespace-nowrap text-[#005fae]">
          <ViewDataIcon />View Data
        </button>
        <button aria-label="More panes" className="ml-1 flex h-[23px] items-center"><ChevronDown size={12} strokeWidth={3} /></button>
      </div>
    </section>
  );
}

function MapStatusBar() {
  return (
    <div className="flex h-[25px] shrink-0 items-center border-b border-l border-[#cfd0d8] bg-[#f7f9f8] pl-[5px] text-[#3c3c3c]">
      <div className="relative flex items-center">
        <select aria-label="Map scale" className="h-[22px] w-[100px] appearance-none border border-[#c3c5cb] bg-white pl-[5px] text-[11px] text-[#111]">
          <option>1:27,691</option>
        </select>
        <ChevronDown size={12} strokeWidth={2.5} className="pointer-events-none absolute right-0.5" />
      </div>
      <span className="ml-1 h-3.5 w-px bg-[#999]" />
      <button aria-label="Snapping" className="ml-1 flex size-5 items-center justify-center border border-[#0a5f9e] bg-[#8dc3ea]">
        <svg width="16" height="16" viewBox="0 0 16 16" aria-hidden="true">
          <path d="M1.5 1.5 H11.5 V7 M1.5 1.5 V11.5 H7 M6.5 1.5 V11.5 M1.5 6.5 H11.5" fill="none" stroke="#7a8a96" />
          <path d="M11.5 8 V15 M8 11.5 H15" stroke="#0a4f86" strokeWidth="1.2" />
        </svg>
      </button>
      <div className="ml-[3px] flex items-center gap-[5px]">
        <button aria-label="Grid" className="flex">
          <svg width="13" height="13" viewBox="0 0 13 13" aria-hidden="true"><path d="M0.5 0 V13 M3.5 0 V13 M6.5 0 V13 M9.5 0 V13 M12.5 0 V13 M0 0.5 H13 M0 3.5 H13 M0 6.5 H13 M0 9.5 H13 M0 12.5 H13" stroke="#a5a8ab" /></svg>
        </button>
        <button aria-label="Inference" className="flex">
          <svg width="16" height="16" viewBox="0 0 16 16" aria-hidden="true">
            <path d="M3.5 11.5 L9.5 5 M6.5 4.5 H10 V7.5 M3 8.5 V12 H6.5" fill="none" stroke="#3e9bdb" />
            <path d="M0.5 1.5 h3.5 v3 h-3.5z M11.5 8.5 h3.5 v3 h-3.5z" fill="#fff" stroke="#666" />
            <path d="M13 0.5 V5 M10.8 2.7 H15.2 M5 2.5 H9" stroke="#555" />
            <path d="M2 14.5 H15" stroke="#7bb77b" strokeWidth="1.4" />
            <path d="M0.5 12.5 h3 v3 h-3z" fill="#4f8f5e" />
          </svg>
        </button>
        <button aria-label="Crosshair" className="flex">
          <svg width="16" height="16" viewBox="0 0 16 16" aria-hidden="true">
            <rect width="8" height="8" fill="#d5ead5" />
            <path d="M8.5 0 V16 M0 7.5 H16" stroke="#888" strokeDasharray="3 1" />
            <rect x="7" y="6" width="3" height="3" fill="#444" />
          </svg>
        </button>
        <button aria-label="North direction" className="flex">
          <svg width="16" height="16" viewBox="0 0 16 16" aria-hidden="true">
            <path d="M1 11.5 V4.5 L5.5 11 V4.5" fill="none" stroke="#3e9bdb" strokeWidth="1.8" />
            <path d="M8.5 0.5 V14.5 L15.5 7" fill="none" stroke="#777" />
            <path d="M10 1.5 C13 1.5 13 4 13 6 M10.8 4 L13 6.5 L15.2 4" fill="none" stroke="#3e9bdb" strokeWidth="1.3" />
          </svg>
        </button>
        <button aria-label="Dynamic constraints" className="flex">
          <svg width="16" height="16" viewBox="0 0 16 16" aria-hidden="true">
            <path d="M1.5 1.5 H8 C11 2 12 5 12 7.5 C12 11 10 13 4 13.5 M12 7.5 H16" fill="none" stroke="#666" strokeWidth="1.2" />
            <circle cx="1.8" cy="2" r="1.6" fill="#d86a4a" />
            <circle cx="12" cy="7.5" r="1.6" fill="#fff" stroke="#8364c0" />
            <rect x="3" y="11.5" width="3.4" height="3.4" fill="#444" />
          </svg>
        </button>
        <button aria-label="More settings" className="flex"><ChevronDown size={12} strokeWidth={4} /></button>
      </div>
      <span className="ml-1.5 h-3.5 w-px bg-[#999]" />
    </div>
  );
}

function MapPane() {
  return (
    <section className="flex min-w-0 grow-[324] basis-0 flex-col pb-[5px]">
      <div className="flex h-6 shrink-0 items-end border-b-2 border-[#005fae]">
        <div className="flex h-[22px] items-center gap-[5px] rounded-t-[3px] bg-[#005fae] pt-0.5 pr-1 pl-1.5 text-[11px] whitespace-nowrap text-white">
          <MapTabIcon />
          <span>Portland Crimes</span>
          <button aria-label="Close map" className="ml-1"><X size={15} strokeWidth={1.5} /></button>
        </div>
      </div>
      <div className="relative min-h-0 flex-1 overflow-hidden border-l border-[#cfd0d8]">
        <CrimeMap />
      </div>
      <MapStatusBar />
    </section>
  );
}

export default function App() {
  return (
    <div className="flex min-h-screen flex-col bg-[#eeeff1] font-['Noto_Sans','Open_Sans',sans-serif]">
      <TitleBar />
      <RibbonTabs />
      <Ribbon />
      <main className="flex flex-1 gap-1.5 pt-[7px] pl-1.5">
        <ViewDataPane />
        <MapPane />
      </main>
    </div>
  );
}
